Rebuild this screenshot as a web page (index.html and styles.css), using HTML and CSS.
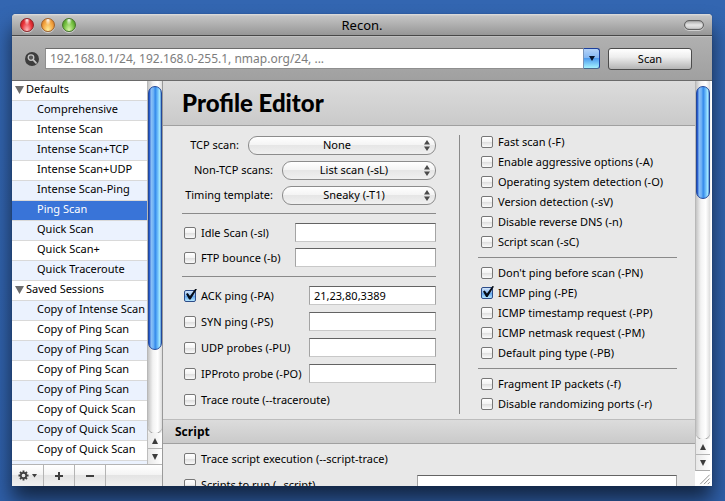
FILE: index.html
```html
<!DOCTYPE html>
<html lang="en">
<head>
<meta charset="utf-8">
<title>Recon.</title>
<link rel="stylesheet" href="styles.css">
</head>
<body>
<div class="window">
  <header class="titlebar">
    <div class="lights">
      <button class="light red" aria-label="Close"></button>
      <button class="light amber" aria-label="Minimize"></button>
      <button class="light green" aria-label="Zoom"></button>
    </div>
    <h1 class="window-title">Recon.</h1>
    <button class="pill" aria-label="Toggle toolbar"></button>
  </header>

  <form class="toolbar">
    <svg class="search-icon" viewBox="0 0 14 14" aria-hidden="true">
      <circle cx="7" cy="7" r="7" fill="#3d3d3d"/>
      <circle cx="6" cy="5.6" r="2.8" fill="#555" stroke="#c4c4c4" stroke-width="1.3"/>
      <path d="M8.2 7.9 11 10.8" stroke="#c4c4c4" stroke-width="1.8" stroke-linecap="round"/>
    </svg>
    <div class="combo">
      <input class="target" type="text" aria-label="Targets" placeholder="192.168.0.1/24, 192.168.0-255.1, nmap.org/24, ...">
      <button class="combo-button" type="button" aria-label="Recent targets"><svg viewBox="0 0 6 5" width="6" height="5"><path d="M0 0h6L3 5z" fill="#08142c"/></svg></button>
    </div>
    <button class="scan" type="button">Scan</button>
  </form>

  <div class="content">
    <aside class="sidebar">
      <div class="list-area">
        <ul class="profiles">
          <li class="group"><svg class="disclosure" viewBox="0 0 9 8"><path d="M0 0h9L4.500 8z" fill="#6d6d6d"/></svg>Defaults</li>
          <li>Comprehensive</li>
          <li>Intense Scan</li>
          <li>Intense Scan+TCP</li>
          <li>Intense Scan+UDP</li>
          <li>Intense Scan-Ping</li>
          <li class="selected">Ping Scan</li>
          <li>Quick Scan</li>
          <li>Quick Scan+</li>
          <li>Quick Traceroute</li>
          <li class="group"><svg class="disclosure" viewBox="0 0 9 8"><path d="M0 0h9L4.500 8z" fill="#6d6d6d"/></svg>Saved Sessions</li>
          <li>Copy of Intense Scan</li>
          <li>Copy of Ping Scan</li>
          <li>Copy of Ping Scan</li>
          <li>Copy of Ping Scan</li>
          <li>Copy of Ping Scan</li>
          <li>Copy of Quick Scan</li>
          <li>Copy of Quick Scan</li>
          <li>Copy of Quick Scan</li>
          <li></li>
        </ul>
        <div class="scrollbar">
          <div class="track"><div class="thumb long"></div></div>
          <button class="arrow" aria-label="Scroll up"><svg viewBox="0 0 6 6" width="6" height="6"><path d="M3 0l3 6H0z" fill="#3c3c3c"/></svg></button>
          <button class="arrow" aria-label="Scroll down"><svg viewBox="0 0 6 6" width="6" height="6"><path d="M3 6l3-6H0z" fill="#3c3c3c"/></svg></button>
        </div>
      </div>
      <div class="actions">
        <button class="action" aria-label="Actions">
          <svg viewBox="0 0 19 11" width="19" height="11">
            <g stroke="#3f3f3f" stroke-width="1.9"><path d="M5.500 .5v2.500M5.500 8v2.500M.5 5.500H3M8 5.500h2.500M2 2l1.700 1.700M7.300 7.300 9 9M9 2 7.300 3.700M3.700 7.300 2 9"/></g>
            <circle cx="5.500" cy="5.500" r="2.700" fill="none" stroke="#3f3f3f" stroke-width="1.700"/>
            <path d="M14 4h5l-2.500 3.500z" fill="#3f3f3f"/>
          </svg>
        </button>
        <button class="action" aria-label="Add"><svg viewBox="0 0 8 8" width="8" height="8"><path d="M4 0v8M0 4h8" stroke="#3f3f3f" stroke-width="2"/></svg></button>
        <button class="action" aria-label="Remove"><svg viewBox="0 0 8 8" width="8" height="8"><path d="M0 4h8" stroke="#3f3f3f" stroke-width="2"/></svg></button>
      </div>
    </aside>

    <main class="editor">
      <div class="page">
        <h2 class="page-title">Profile Editor</h2>
        <div class="options">
          <div class="scans">
            <div class="group-rows">
              <div class="choice"><label for="tcp">TCP scan:</label><span class="popup wide"><select id="tcp"><option>None</option></select><svg viewBox="0 0 6 11"><path d="M3 0l3 4.500H0zM3 11l3-4.500H0z" fill="#4a4a4a"/></svg></span></div>
              <div class="choice"><label for="nontcp">Non-TCP scans:</label><span class="popup"><select id="nontcp"><option>List scan (-sL)</option></select><svg viewBox="0 0 6 11"><path d="M3 0l3 4.500H0zM3 11l3-4.500H0z" fill="#4a4a4a"/></svg></span></div>
              <div class="choice"><label for="timing">Timing template:</label><span class="popup"><select id="timing"><option>Sneaky (-T1)</option></select><svg viewBox="0 0 6 11"><path d="M3 0l3 4.500H0zM3 11l3-4.500H0z" fill="#4a4a4a"/></svg></span></div>
            </div>
            <hr>
            <div class="group-rows medium">
              <div class="row"><label><input type="checkbox">Idle Scan (-sl)</label><input class="field" type="text" aria-label="Idle host"></div>
              <div class="row"><label><input type="checkbox">FTP bounce (-b)</label><input class="field" type="text" aria-label="FTP host"></div>
            </div>
            <hr>
            <div class="group-rows">
              <div class="row"><label><input type="checkbox" checked>ACK ping (-PA)</label><input class="field short" type="text" aria-label="ACK ports" value="21,23,80,3389"></div>
              <div class="row"><label><input type="checkbox">SYN ping (-PS)</label><input class="field short" type="text" aria-label="SYN ports"></div>
              <div class="row"><label><input type="checkbox">UDP probes (-PU)</label><input class="field short" type="text" aria-label="UDP ports"></div>
              <div class="row"><label><input type="checkbox">IPProto probe (-PO)</label><input class="field short" type="text" aria-label="Protocols"></div>
              <div class="row"><label><input type="checkbox">Trace route (--traceroute)</label></div>
            </div>
          </div>
          <div class="flags">
            <div class="checks">
              <label><input type="checkbox">Fast scan (-F)</label>
              <label><input type="checkbox">Enable aggressive options (-A)</label>
              <label><input type="checkbox">Operating system detection (-O)</label>
              <label><input type="checkbox">Version detection (-sV)</label>
              <label><input type="checkbox">Disable reverse DNS (-n)</label>
              <label><input type="checkbox">Script scan (-sC)</label>
            </div>
            <hr>
            <div class="checks">
              <label><input type="checkbox">Don't ping before scan (-PN)</label>
              <label><input type="checkbox" checked>ICMP ping (-PE)</label>
              <label><input type="checkbox">ICMP timestamp request (-PP)</label>
              <label><input type="checkbox">ICMP netmask request (-PM)</label>
              <label><input type="checkbox">Default ping type (-PB)</label>
            </div>
            <hr>
            <div class="checks">
              <label><input type="checkbox">Fragment IP packets (-f)</label>
              <label><input type="checkbox">Disable randomizing ports (-r)</label>
            </div>
          </div>
        </div>
        <h3 class="section-title">Script</h3>
        <div class="group-rows script">
          <div class="row"><label><input type="checkbox">Trace script execution (--script-trace)</label></div>
          <div class="row"><label><input type="checkbox">Scripts to run (--script)</label><input class="field long" type="text" aria-label="Scripts"></div>
        </div>
      </div>
      <div class="main-rail">
        <div class="scrollbar">
          <div class="track"><div class="thumb"></div></div>
          <button class="arrow" aria-label="Scroll up"><svg viewBox="0 0 6 6" width="6" height="6"><path d="M3 0l3 6H0z" fill="#3c3c3c"/></svg></button>
          <button class="arrow" aria-label="Scroll down"><svg viewBox="0 0 6 6" width="6" height="6"><path d="M3 6l3-6H0z" fill="#3c3c3c"/></svg></button>
        </div>
        <svg class="grip" viewBox="0 0 16 16"><path d="M4 14 14 4M8 14l6-6M12 14l2-2" stroke="#8a8a8a" stroke-width="1"/></svg>
      </div>
    </main>
  </div>
</div>
</body>
</html>
```

FILE: styles.css
```css
* { box-sizing: border-box; }

body {
  margin: 0;
  height: 100vh;
  padding: 14px 13px 15px 12px;
  overflow: hidden;
  background: linear-gradient(#3366b1, #2f5fa8);
  font-family: "Noto Sans", "Open Sans", sans-serif;
  font-size: 11px;
  color: #000;
}

button, input, select { font: inherit; color: inherit; margin: 0; padding: 0; }
button { border: 0; background: none; }
h1, h2, h3, ul { margin: 0; padding: 0; }

.window {
  display: flex;
  flex-direction: column;
  height: 100%;
  border-radius: 4px 4px 0 0;
  box-shadow: 0 0 1px #1b2f50, 0 14px 20px rgba(0, 0, 0, .6);
  background: #e8e8e8;
}

/* Title bar */
.titlebar {
  display: grid;
  grid-template-columns: 1fr auto 1fr;
  align-items: center;
  flex: none;
  height: 22px;
  padding: 0 8px;
  border-bottom: 1px solid #484848;
  border-radius: 4px 4px 0 0;
  background: linear-gradient(#e0e0e0, #c4c4c4 2px, #969696);
}
.lights { display: flex; gap: 7px; }
.light {
  width: 14px;
  height: 14px;
  border: 1px solid;
  border-radius: 50%;
  box-shadow: 0 1px 0 #d0d0d0;
}
.red { border-color: #8e2528; background: radial-gradient(ellipse at 50% 5%, #fff 0, transparent 35%), radial-gradient(ellipse at 50% 100%, #ffc4c6, #e83238 60%, #b4141a); }
.amber { border-color: #a0622a; background: radial-gradient(ellipse at 50% 5%, #fff 0, transparent 35%), radial-gradient(ellipse at 50% 100%, #fff3a4, #f5a540 60%, #c86e1e); }
.green { border-color: #46752a; background: radial-gradient(ellipse at 50% 5%, #fff 0, transparent 35%), radial-gradient(ellipse at 50% 100%, #dcf9ac, #74c040 60%, #3c801c); }
.window-title { font-size: 13px; font-weight: 400; line-height: 20px; }
.pill {
  justify-self: end;
  width: 20px;
  height: 10px;
  border: 1px solid #626262;
  border-radius: 5px;
  background: linear-gradient(#aaa, #e6e6e6 50%, #c8c8c8);
  box-shadow: inset 0 0 1px #555, 0 1px 0 #d0d0d0;
}

/* Toolbar */
.toolbar {
  display: flex;
  align-items: center;
  flex: none;
  height: 45px;
  padding: 0 20px 0 13px;
  border-top: 1px solid #c0c0c0;
  border-bottom: 1px solid #6a6a6a;
  background: linear-gradient(#b0b0b0, #a0a0a0);
}
.search-icon { width: 14px; height: 14px; margin-right: 6px; }
.combo { display: flex; flex: 1; height: 21px; margin-right: 8px; }
.target {
  flex: 1;
  min-width: 0;
  padding: 0 4px;
  border: 1px solid #8f8f8f;
  border-top-color: #6c6c6c;
  border-right: 0;
  background: #fff;
  font-size: 12px;
}
.target::placeholder { color: #7d7d7d; }
.combo-button {
  display: flex;
  align-items: center;
  justify-content: center;
  width: 17px;
  border: 1px solid #1c3f9c;
  border-left-color: #7a94b8;
  border-bottom-color: #48688c;
  border-radius: 0 3px 3px 0;
  background: linear-gradient(#b4d3f8, #86b8f2 45%, #4e9cee 50%, #a4f2ff);
}
.scan {
  width: 84px;
  height: 22px;
  border: 1px solid #4c4c4c;
  border-radius: 3px;
  background: linear-gradient(#fff, #eee 40%, #b4b4b4);
}

/* Body */
.content { display: flex; flex: 1; min-height: 0; }
.sidebar {
  display: flex;
  flex-direction: column;
  flex: 0 0 151px;
  border-right: 1px solid #9a9a9a;
}
.list-area { display: flex; flex: 1; min-height: 0; }
.profiles {
  flex: 1;
  min-width: 0;
  overflow: hidden;
  list-style: none;
  background: #fff;
}
.profiles li {
  height: 20px;
  padding-left: 25px;
  overflow: hidden;
  border-bottom: 1px solid #d9d9d9;
  line-height: 16px;
  white-space: nowrap;
}
.profiles li:nth-child(even) { background: #ebf2fe; }
.profiles .group { padding-left: 3px; }
.profiles .selected { background: #3974d8; border-color: #d9d9d9; color: #fff; }
.disclosure { width: 9px; height: 8px; margin-right: 2px; vertical-align: -1px; }

.actions {
  display: flex;
  flex: none;
  height: 22px;
  border-top: 1px solid #b4b4b4;
  background: linear-gradient(#fff, #f4f4f4 45%, #e4e4e4 50%, #f0f0f0);
}
.action {
  display: flex;
  align-items: center;
  justify-content: center;
  width: 31px;
  border-right: 1px solid #b4b4b4;
}
.action:first-child { width: 32px; }

/* Scroll bars */
.scrollbar {
  display: flex;
  flex: 1;
  flex-direction: column;
  max-width: 15px;
  border-left: 1px solid #bdbdbd;
  background: #f4f4f4;
}
.track {
  flex: 1;
  min-height: 0;
  padding-top: 5px;
  border-radius: 0 0 7px 7px;
  background: linear-gradient(90deg, #c4c4c4, #f3f3f3 35%, #fff 70%, #dcdcdc);
  box-shadow: 0 1px 1px #8a8a8a;
}
.thumb {
  height: 32%;
  border: 1px solid #23489a;
  border-radius: 7px;
  background: linear-gradient(90deg, #0b3fc0, #8cc0f6 18%, #6bb0f5 38%, #3389ea 52%, #6cbcfa 72%, #a8ecff 90%, #4a87cf);
}
.thumb.long { height: 76%; }
.arrow {
  display: flex;
  align-items: center;
  justify-content: center;
  height: 15px;
  background: linear-gradient(90deg, #e8e8e8, #fff);
}
.arrow + .arrow { height: 16px; border-top: 1px solid #b4b4b4; }

/* Editor */
.editor { display: flex; flex: 1; min-width: 0; }
.page { flex: 1; min-width: 0; overflow: hidden; }
.main-rail { display: flex; flex-direction: column; flex: 0 0 17px; background: #fff; }
.main-rail .scrollbar { border-bottom: 1px solid #aaa; }
.grip { width: 16px; height: 15px; align-self: flex-end; }

.page-title {
  height: 45px;
  padding-left: 19px;
  border-bottom: 1px solid #a0a0a0;
  background: linear-gradient(#dcdcdc, #cacaca);
  font-family: Lato, sans-serif;
  font-size: 24px;
  font-weight: 900;
  line-height: 44px;
}
.section-title {
  height: 25px;
  padding-left: 12px;
  border-top: 1px solid #bcbcbc;
  border-bottom: 1px solid #a0a0a0;
  background: linear-gradient(#dcdcdc, #cacaca);
  font-family: "Open Sans", sans-serif;
  font-size: 12px;
  font-weight: 700;
  line-height: 23px;
}
.options { display: flex; padding: 9px 18px 5px 19px; }
.scans { flex: 0 0 254px; margin-right: 23px; padding: 1px 0 5px; }
.flags { flex: 1; min-width: 0; padding-left: 18px; border-left: 1px solid #8a8a8a; }

hr { height: 1px; margin: 9px 0; border: 0; background: #8a8a8a; }
.flags hr { margin: 8px 0; }

.group-rows { display: grid; gap: 7px; }
.medium { gap: 6px; }
.script { padding: 5px 18px 0 19px; }

.choice { display: flex; align-items: center; justify-content: flex-end; gap: 9px; height: 18px; }
.popup { position: relative; width: 154px; height: 19px; }
.popup.wide { width: 188px; }
.popup select {
  width: 100%;
  height: 100%;
  padding: 0 10px 1px 0;
  border: 1px solid #8c8c8c;
  border-radius: 9px;
  appearance: none;
  background: linear-gradient(#fff, #f4f4f4 45%, #e6e6e6 50%, #f0f0f0);
  text-align: center;
  text-align-last: center;
}
.popup svg { position: absolute; top: 4px; right: 6px; width: 6px; height: 11px; pointer-events: none; }

.row { display: flex; align-items: center; justify-content: space-between; height: 19px; }
label { line-height: 14px; white-space: nowrap; }
.row label, .checks label { display: flex; align-items: center; gap: 5px; padding-left: 2px; }
.checks { display: grid; gap: 6px; }
.checks label { height: 14px; padding-left: 3px; }

input[type="checkbox"] {
  position: relative;
  width: 12px;
  height: 12px;
  border: 1px solid #777;
  border-radius: 2px;
  appearance: none;
  background: linear-gradient(#fff, #f4f4f4 45%, #dedede 50%, #fafafa);
}
input[type="checkbox"]:checked {
  border-color: #2d4c88;
  background: linear-gradient(#d4e6fb, #8dbcf2 45%, #5fa3ee 50%, #b4e6ff);
}
input[type="checkbox"]:checked::after {
  content: "";
  position: absolute;
  top: -2px;
  left: 1px;
  width: 11px;
  height: 11px;
  background: #060d18;
  clip-path: polygon(0 50%, 16% 40%, 36% 68%, 86% 0, 100% 4%, 42% 100%, 28% 100%);
}
.field {
  width: 141px;
  height: 19px;
  padding: 0 4px;
  border: 1px solid #a4a4a4;
  border-top-color: #636363;
  border-bottom-color: #c8c8c8;
  background: #fff;
}
.field.short { width: 127px; }
.field.long { width: 260px; }
```
